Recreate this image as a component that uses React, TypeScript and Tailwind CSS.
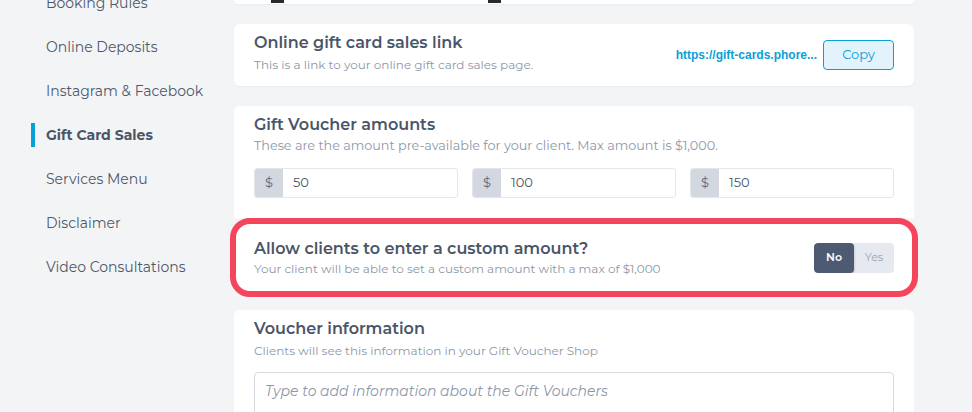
import { useState } from "react";

const nav = [
  "Booking Rules",
  "Online Deposits",
  "Instagram & Facebook",
  "Gift Card Sales",
  "Services Menu",
  "Disclaimer",
  "Video Consultations",
];

const font = { fontFamily: "Montserrat, 'Open Sans', sans-serif" };

function AmountInput({ value }: { value: string }) {
  return (
    <div className="flex h-[30px] flex-1 overflow-hidden rounded-[3px] border border-[#e3e6eb] bg-white">
      <div className="flex w-[28px] items-center justify-center bg-[#d3d8e0] text-[13px] text-[#5b6478]">
        $
      </div>
      <div className="flex items-center pl-[10px] text-[13px] text-[#4b5568]">{value}</div>
    </div>
  );
}

export default function App() {
  const [custom, setCustom] = useState(false);

  return (
    <div
      className="flex h-[412px] w-[972px] overflow-hidden bg-[#f3f4f6] text-[#4a5568]"
      style={font}
    >
      {/* Sidebar */}
      <div className="w-[234px] shrink-0">
        <ul className="-mt-[19px]">
          {nav.map((item) => {
            const active = item === "Gift Card Sales";
            return (
              <li key={item} className="relative flex h-[44px] items-center pl-[46px] text-[14px]">
                {active && (
                  <span className="absolute left-[31px] top-[10px] h-[24px] w-[4px] bg-[#0a9fd8]" />
                )}
                <span className={active ? "font-bold text-[#4a5568]" : "text-[#4e586b]"}>
                  {item}
                </span>
              </li>
            );
          })}
        </ul>
      </div>

      {/* Main */}
      <div className="flex w-[680px] flex-col">
        <div className="relative h-[4px] shrink-0 rounded-b-[6px] bg-white shadow-[0_1px_2px_rgba(0,0,0,0.04)]">
          <span className="absolute left-[37px] top-0 h-[3px] w-[13px] bg-[#2a2a2a]" />
          <span className="absolute left-[254px] top-0 h-[3px] w-[13px] bg-[#2a2a2a]" />
        </div>

        {/* Sales link */}
        <div className="mt-[20px] flex h-[62px] shrink-0 items-start rounded-[6px] bg-white px-[20px] pt-[9px] shadow-[0_1px_2px_rgba(0,0,0,0.04)]">
          <div className="flex-1">
            <div className="text-[16px] font-semibold leading-[20px] text-[#4a5568]">
              Online gift card sales link
            </div>
            <div className="mt-[5px] text-[12px] leading-[14px] text-[#8e97a8]">
              This is a link to your online gift card sales page.
            </div>
          </div>
          <div className="mt-[7px] flex items-center">
            <div
              className="mr-[6px] text-[12px] font-bold text-[#0a9fd8]"
              style={{ fontFamily: "'Liberation Sans', Arial, sans-serif" }}
            >
              https://gift-cards.phore...
            </div>
            <button className="h-[30px] w-[71px] rounded-[4px] border border-[#0a9fd8] bg-[#e3f3fb] text-[13px] text-[#0a9fd8]">
              Copy
            </button>
          </div>
        </div>

        {/* Amounts */}
        <div className="mt-[20px] h-[112px] shrink-0 rounded-t-[6px] bg-white px-[20px] pt-[9px]">
          <div className="text-[16px] font-semibold leading-[20px] text-[#4a5568]">
            Gift Voucher amounts
          </div>
          <div className="mt-[3px] text-[12.75px] leading-[16px] text-[#8e97a8]">
            These are the amount pre-available for your client. Max amount is $1,000.
          </div>
          <div className="mt-[14px] flex gap-[14px]">
            <AmountInput value="50" />
            <AmountInput value="100" />
            <AmountInput value="150" />
          </div>
        </div>

        {/* Custom amount, highlighted */}
        <div className="-mx-[4px] flex h-[79px] shrink-0 items-center rounded-[20px] border-[6px] border-[#f5455c] bg-white pl-[18px] pr-[18px]">
          <div className="flex-1">
            <div className="text-[16px] font-semibold leading-[20px] text-[#4a5568]">
              Allow clients to enter a custom amount?
            </div>
            <div className="mt-[3px] text-[12px] leading-[14px] text-[#8e97a8]">
              Your client will be able to set a custom amount with a max of $1,000
            </div>
          </div>
          <div className="flex h-[30px] w-[80px] overflow-hidden rounded-[4px] bg-[#e6e9ef]">
            <button
              onClick={() => setCustom(false)}
              className={
                custom
                  ? "flex-1 text-[11px] text-[#9aa3b3]"
                  : "flex-1 rounded-[4px] bg-[#4d5a72] text-[11px] font-semibold text-white shadow-[0_1px_3px_rgba(0,0,0,0.2)]"
              }
            >
              No
            </button>
            <button
              onClick={() => setCustom(true)}
              className={
                custom
                  ? "flex-1 rounded-[4px] bg-[#4d5a72] text-[11px] font-semibold text-white"
                  : "flex-1 text-[11px] text-[#9aa3b3]"
              }
            >
              Yes
            </button>
          </div>
        </div>

        {/* Voucher information */}
        <div className="mt-[13px] h-[120px] shrink-0 rounded-t-[6px] bg-white px-[20px] pt-[9px]">
          <div className="text-[16px] font-semibold leading-[20px] text-[#4a5568]">
            Voucher information
          </div>
          <div className="mt-[5px] text-[12px] leading-[14px] text-[#8e97a8]">
            Clients will see this information in your Gift Voucher Shop
          </div>
          <div className="mt-[14px] h-[60px] rounded-[4px] border border-[#d5d9e0] px-[10px] pt-[8px] text-[14px] leading-[20px] italic text-[#8e97a8]">
            Type to add information about the Gift Vouchers
          </div>
        </div>
      </div>
    </div>
  );
}
